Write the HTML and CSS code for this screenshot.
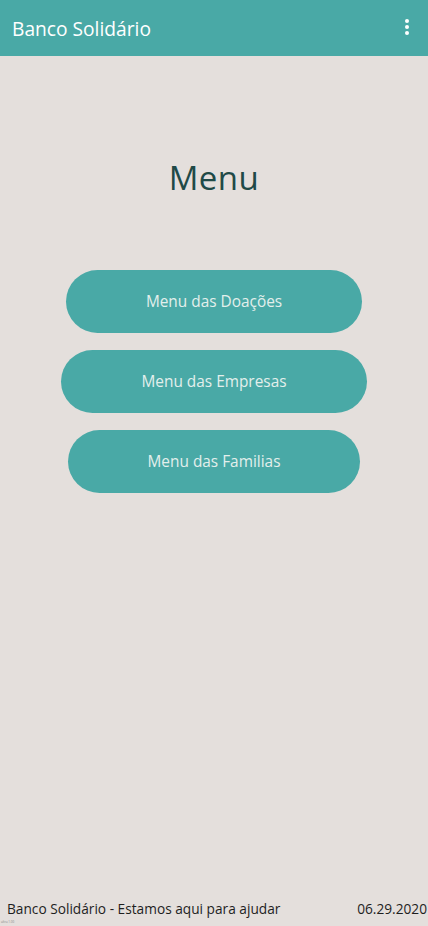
FILE: index.html
```html
<!DOCTYPE html>
<html lang="pt">
<head>
<meta charset="utf-8">
<title>Banco Solidário</title>
<link rel="stylesheet" href="styles.css">
</head>
<body>
<div class="app">
  <header class="topbar">
    <span class="title">Banco Solidário</span>
    <svg class="more" width="6" height="18" viewBox="0 0 6 18"><circle cx="3" cy="3" r="2" fill="#fff"/><circle cx="3" cy="9" r="2" fill="#fff"/><circle cx="3" cy="15" r="2" fill="#fff"/></svg>
  </header>
  <main class="content">
    <h1 class="heading">Menu</h1>
    <div class="buttons">
      <button class="btn">Menu das Doações</button>
      <button class="btn">Menu das Empresas</button>
      <button class="btn">Menu das Familias</button>
    </div>
  </main>
  <footer class="footer">
    <div class="footrow">
      <span>Banco Solidário - Estamos aqui para ajudar</span>
      <span>06.29.2020</span>
    </div>
    <div class="version">ultra 1.00</div>
  </footer>
</div>
</body>
</html>
```
FILE: styles.css
```css
html, body { margin: 0; padding: 0; }
body {
  background: #e4dfdc;
  font-family: "Open Sans", "Noto Sans", sans-serif;
}
.app {
  display: flex;
  flex-direction: column;
  height: 926px;
}
.topbar {
  height: 56px;
  background: #49a9a6;
  display: flex;
  align-items: center;
  justify-content: space-between;
  padding: 0 18px 0 12px;
  box-sizing: border-box;
}
.title {
  color: #fff;
  font-size: 19.2px;
}
.more { display: block; margin-top: -2px; }
.content {
  flex: 1;
  display: flex;
  flex-direction: column;
  align-items: center;
}
.heading {
  margin: 100px 0 0;
  font-weight: 400;
  font-size: 33px;
  line-height: 44px;
  color: #1f4a47;
  letter-spacing: 0.5px;
}
.buttons {
  margin-top: 70px;
  display: flex;
  flex-direction: column;
  align-items: center;
  gap: 17px;
}
.btn {
  height: 63px;
  padding: 0 80px;
  border: none;
  border-radius: 32px;
  background: #49a9a6;
  color: #e3efec;
  font-family: inherit;
  font-size: 15.4px;
}
.footer {
  padding: 0 1px 0 7px;
  color: #1e1e1e;
  font-size: 13.7px;
}
.footrow {
  display: flex;
  justify-content: space-between;
  line-height: 18px;
}
.version {
  font-size: 3px;
  line-height: 8px;
  color: #888;
  margin-left: -7px;
  padding-left: 1px;
}
```
